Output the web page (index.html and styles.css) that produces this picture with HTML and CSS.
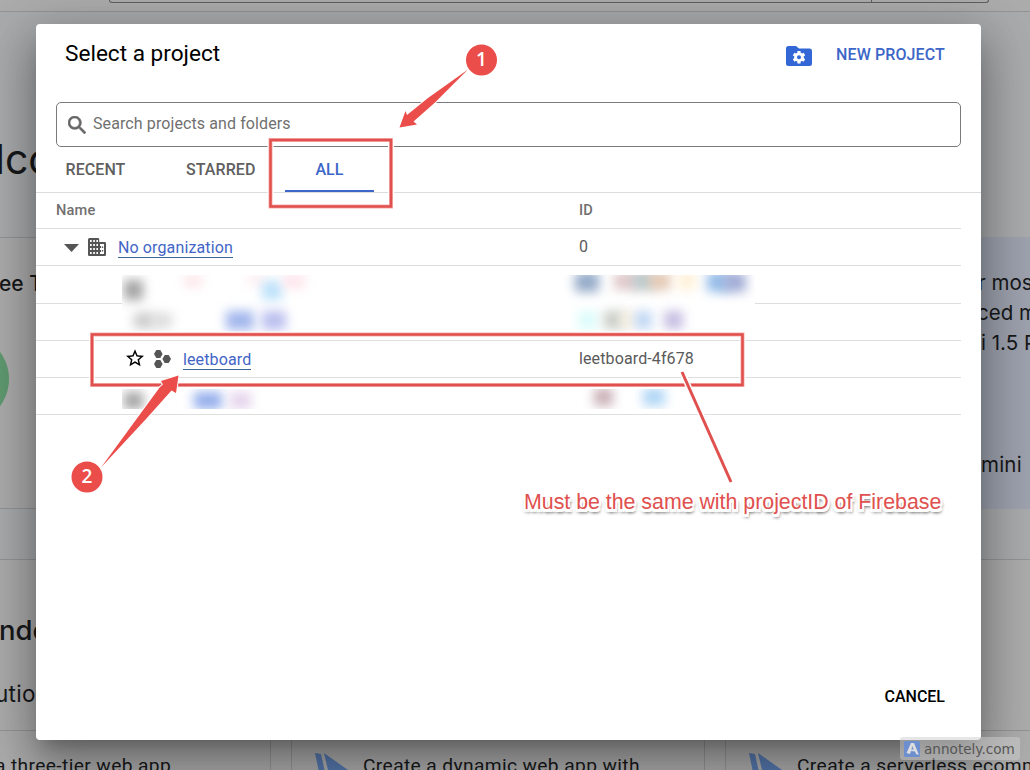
FILE: index.html
```html
<!DOCTYPE html>
<html lang="en">
<head>
<meta charset="utf-8">
<title>Select a project</title>
<link rel="stylesheet" href="styles.css">
</head>
<body>
<div class="page">
  <header class="topbar"><div class="top-search"></div></header>
  <section class="welcome"><h1>lco</h1></section>
  <section class="promo">
    <div class="trial"><span>ee T</span>
      <svg class="ring" width="9" height="90" viewBox="0 0 9 90"><circle cx="-37" cy="45" r="46" fill="#5f9a70"/></svg>
    </div>
    <div class="gemini"><p>r mos</p><p>ced m</p><p>i 1.5 P</p><p class="try">mini</p></div>
  </section>
  <section class="gap"></section>
  <section class="recommended"><h2>nde</h2><p>utio</p></section>
  <section class="cards">
    <div class="card first">a three-tier web app</div>
    <div class="card"><svg class="flag" width="36" height="24" viewBox="0 0 36 24"><path d="M0 0l6 1 5 23H5z" fill="#5577ac"/><path d="M9 0l24 17H13z" fill="#5577ac"/><path d="M13 17h20l-8 7H15z" fill="#254b91"/></svg>Create a dynamic web app with</div>
    <div class="card last"><svg class="flag" width="36" height="24" viewBox="0 0 36 24"><path d="M0 0l6 1 5 23H5z" fill="#5577ac"/><path d="M9 0l24 17H13z" fill="#5577ac"/><path d="M13 17h20l-8 7H15z" fill="#254b91"/></svg>Create a serverless ecomm</div>
  </section>
</div>

<main class="dialog">
  <div class="head">
    <h2 class="title">Select a project</h2>
    <svg class="folder" width="26" height="20" viewBox="0 0 26 20"><path d="M2.500 0H10l3 2.600h10.500A2.500 2.500 0 0 1 26 5v12.500a2.500 2.500 0 0 1-2.500 2.500h-21A2.500 2.500 0 0 1 0 17.500v-15A2.500 2.500 0 0 1 2.500 0z" fill="#3367d6"/><g fill="#fff" transform="translate(13 11.200)"><circle r="4.800"/><rect x="-1.600" y="-6.300" width="3.200" height="12.600" rx=".6"/><rect x="-1.600" y="-6.300" width="3.200" height="12.600" rx=".6" transform="rotate(60)"/><rect x="-1.600" y="-6.300" width="3.200" height="12.600" rx=".6" transform="rotate(120)"/></g><circle cx="13" cy="11.200" r="2" fill="#3367d6"/></svg>
    <a class="new">NEW PROJECT</a>
  </div>
  <div class="search">
    <svg width="18" height="18" viewBox="3 3 17.500 17.500"><path fill="#666" stroke="#666" stroke-width=".6" d="M15.500 14h-.79l-.28-.27A6.471 6.471 0 0 0 16 9.500 6.500 6.500 0 1 0 9.500 16c1.610 0 3.090-.59 4.230-1.570l.27.28v.79l5 4.990L20.490 19l-4.990-5zm-6 0C7.010 14 5 11.990 5 9.500S7.010 5 9.500 5 14 7.010 14 9.500 11.990 14 9.500 14z"/></svg>
    <span>Search projects and folders</span>
  </div>
  <nav class="tabs"><span class="tab recent">RECENT</span><span class="tab starred">STARRED</span><span class="tab all">ALL</span></nav>
  <div class="table">
    <div class="row header"><span class="name">Name</span><span class="id">ID</span></div>
    <div class="row org">
      <span class="name">
        <svg class="caret" width="15" height="8" viewBox="0 0 15 8"><path d="M0 0h15L7.500 8z" fill="#555"/></svg>
        <svg class="building" width="18" height="18" viewBox="0 0 18 18"><path fill="#555" fill-rule="evenodd" d="M1.500 0h8.500a1.200 1.200 0 0 1 1.200 1.200V4h5.600A1.200 1.200 0 0 1 18 5.200v11.600a1.200 1.200 0 0 1-1.200 1.200H1.200A1.200 1.200 0 0 1 0 16.800V1.500A1.500 1.500 0 0 1 1.500 0zM2 2v2h1.700V2zm3.200 0v2h1.700V2zm3.200 0v2H10V2zM2 6v2h1.700V6zm3.200 0v2h1.700V6zm3.200 0v2H10V6zM2 10v2h1.700v-2zm3.200 0v2h1.700v-2zm3.200 0v2H10v-2zM2 14v2h1.700v-2zm3.200 0v2h1.700v-2zm3.200 0v2H10v-2zM12 6v2h1v2h-1v2h1v2h-1v2h4V6zm1.800 2.500h1.400V10h-1.400zm0 3.500h1.400v1.500h-1.400z"/></svg>
        <a>No organization</a></span><span class="id">0</span>
    </div>
    <div class="row"></div>
    <div class="row second"></div>
    <div class="row leet">
      <span class="name">
        <svg class="star" width="18" height="18" viewBox="2 2 20 19.500"><path d="M22 9.240l-7.190-.62L12 2 9.190 8.630 2 9.240l5.460 4.730L5.820 21 12 17.270 18.180 21l-1.630-7.030L22 9.240zM12 15.400l-3.760 2.270 1-4.280-3.320-2.880 4.380-.38L12 6.100l1.710 4.040 4.380.38-3.320 2.880 1 4.280L12 15.400z"/></svg>
        <svg class="hex" width="17" height="18" viewBox="0 0 17 18" fill="#555"><path d="M2.300 0h4l2.300 4-2.300 4h-4L0 4z"/><path d="M2.300 10h4l2.300 4-2.300 4h-4L0 14z"/><path d="M10.700 5h4L17 9l-2.300 4h-4L8.400 9z"/></svg>
        <a>leetboard</a></span><span class="id">leetboard-4f678</span>
    </div>
    <div class="row"></div>
  </div>
  <div class="actions"><a>CANCEL</a></div>
</main>

<div class="redacted upper">
  <i style="left:2px;top:5px;width:19px;height:20px;background:#999"></i>
  <i style="left:62px;top:0;width:18px;height:12px;background:#fce3e8"></i>
  <i style="left:125px;top:0;width:20px;height:10px;background:#fdecef"></i>
  <i style="left:140px;top:6px;width:20px;height:19px;background:#b5defb"></i>
  <i style="left:161px;top:0;width:22px;height:13px;background:#fde0e8"></i>
  <i style="left:12px;top:38px;width:20px;height:15px;background:#c4c4c4"></i>
  <i style="left:30px;top:38px;width:20px;height:15px;background:#d8d8d8"></i>
  <i style="left:104px;top:36px;width:28px;height:19px;background:#98aeeb"></i>
  <i style="left:140px;top:36px;width:24px;height:19px;background:#b3b8ed"></i>
  <i style="left:453px;top:-3px;width:24px;height:20px;background:#88a1c2"></i>
  <i style="left:492px;top:-3px;width:24px;height:18px;background:#dcc2c3"></i>
  <i style="left:511px;top:-3px;width:22px;height:18px;background:#b0c2c5"></i>
  <i style="left:527px;top:-3px;width:22px;height:18px;background:#e3c4ad"></i>
  <i style="left:556px;top:-3px;width:18px;height:18px;background:#fff0d5"></i>
  <i style="left:585px;top:-3px;width:22px;height:20px;background:#88b5e6"></i>
  <i style="left:602px;top:-3px;width:22px;height:20px;background:#98a3d1"></i>
  <i style="left:456px;top:36px;width:20px;height:18px;background:#d8fcfa"></i>
  <i style="left:482px;top:36px;width:20px;height:18px;background:#c0c8c0"></i>
  <i style="left:498px;top:36px;width:16px;height:18px;background:#f6eddf"></i>
  <i style="left:513px;top:36px;width:17px;height:18px;background:#b8d2f2"></i>
  <i style="left:542px;top:36px;width:19px;height:18px;background:#c0b6df"></i>
</div>
<div class="redacted lower">
  <i style="left:2px;top:3px;width:19px;height:17px;background:#999"></i>
  <i style="left:72px;top:3px;width:28px;height:17px;background:#88a5ea"></i>
  <i style="left:108px;top:3px;width:21px;height:17px;background:#e2d0eb"></i>
  <i style="left:472px;top:-1px;width:19px;height:18px;background:#c4a8b0"></i>
  <i style="left:521px;top:-1px;width:22px;height:18px;background:#a8d2f5"></i>
</div>

<svg class="marks" width="1030" height="770" viewBox="0 0 1030 770">
  <g fill="none" stroke="#fff" stroke-width="6"><rect x="270.500" y="140" width="120.500" height="66.500"/><rect x="92" y="334.500" width="650.500" height="50.500"/></g>
  <g fill="none" stroke="#f7b0ae" stroke-width="4"><rect x="270.500" y="140" width="120.500" height="66.500"/><rect x="92" y="334.500" width="650.500" height="50.500"/></g>
  <g fill="none" stroke="#df504e" stroke-width="2.500"><rect x="270.500" y="140" width="120.500" height="66.500"/><rect x="92" y="334.500" width="650.500" height="50.500"/></g>
  <path d="M682 372l49 110" stroke="#fff" stroke-width="6"/>
  <path d="M682 372l49 110" stroke="#df504e" stroke-width="3"/>
  <g fill="#eb4d4b" stroke="#fff" stroke-width="2" paint-order="stroke">
    <path d="M468 69.500L435 102.500 413.500 121.500 417 124.500 399.500 127.500 405.500 111 407 115 428 98z"/>
    <path d="M101 467.500L160 387 163 384.500 161 381 178.500 375.500 176 393 171.500 390.500 146 419z"/>
  </g>
  <g fill="#eb4d4b"><circle cx="481.500" cy="60" r="15.500"/><circle cx="87" cy="477" r="15.500"/></g>
</svg>
<span class="num one">1</span>
<span class="num two">2</span>
<p class="note">Must be the same with projectID of Firebase</p>
<div class="watermark"><svg width="16" height="16" viewBox="0 0 16 16"><rect width="16" height="16" rx="1.500" fill="#6d8fd0"/><path d="M2.500 12L7 2h3l5 12-3-1-1-2.500-4-.5-1 3zM8.500 5L7.300 8.500h2.400z" fill="#ddd" fill-rule="evenodd"/></svg><span>annotely.com</span></div>
</body>
</html>
```
FILE: styles.css
```css
* { box-sizing: border-box; }
body { margin: 0; width: 1030px; height: 770px; overflow: hidden; position: relative; font-family: Roboto, sans-serif; }
h1, h2, p { margin: 0; font-weight: 400; }
.page { width: 1030px; height: 770px; overflow: hidden; background: #acacac; color: #17181a; display: flex; flex-direction: column; white-space: nowrap; font-family: Inter, sans-serif; }
.topbar { height: 12px; flex: none; border-bottom: 1px solid #929496; padding-left: 109px; }
.top-search { width: 880px; height: 3px; border: 1px solid #5d5f61; border-top: 0; border-radius: 0 0 4px 4px; background: linear-gradient(90deg, transparent 761px, #5d5f61 761px, #5d5f61 762px, transparent 762px); }
.welcome { height: 225px; flex: none; background: #a9abad; padding-top: 122px; }
.welcome h1 { font-size: 41px; line-height: 50px; margin-left: -5px; }
.promo { height: 272px; flex: none; display: flex; justify-content: space-between; background: #acacac; }
.trial { width: 60px; border-top: 1px solid #929496; border-bottom: 1px solid #929496; padding-top: 33px; font-size: 21px; line-height: 26px; font-weight: 500; }
.trial span { margin-left: -1px; }
.ring { display: block; margin-top: 37px; }
.gemini { width: 49px; background: #9da2ae; overflow: hidden; padding-top: 31px; font-size: 20.500px; line-height: 30px; display: flex; flex-direction: column; }
.gemini p:nth-child(1) { margin-left: -3px; }
.gemini p:nth-child(2) { margin-left: -4px; }
.gemini .try { margin-top: 92px; letter-spacing: .2px; }
.gap { height: 51px; flex: none; background: #a9abad; border-bottom: 1px solid #929496; }
.recommended { height: 170px; flex: none; padding-top: 51px; }
.recommended h2 { font-size: 27.500px; line-height: 38px; font-weight: 500; margin-left: -1px; }
.recommended p { font-size: 22.500px; line-height: 30px; margin: 30px 0 0 -5px; letter-spacing: .3px; }
.cards { flex: none; height: 40px; display: flex; gap: 20px; font-family: Roboto, sans-serif; font-size: 19.200px; letter-spacing: .38px; }
.card { width: 414px; height: 100px; flex: none; border: 1px solid #929496; padding: 22px 0 0 23px; display: flex; line-height: 26px; }
.card.first { width: 271px; border-left: 0; padding-left: 0; text-indent: -5px; }
.card .flag { flex: none; margin-right: 12px; }
.dialog { position: absolute; left: 36px; top: 24px; width: 945px; height: 716px; background: #fff; border-radius: 4px; display: flex; flex-direction: column; box-shadow: 0 12px 16px -8px rgba(0,0,0,.22), 0 27px 43px 3px rgba(0,0,0,.2), 0 10px 52px 9px rgba(0,0,0,.2); }
.head { height: 78px; padding: 14px 36px 0 29px; display: flex; align-items: flex-start; }
.title { font-size: 22.600px; line-height: 30px; flex: 1; margin-top: 1px; }
.folder { margin: 8px 24px 0 0; }
.new { color: #3c66c8; font-size: 16px; font-weight: 500; line-height: 34px; letter-spacing: .12px; }
.search { height: 45px; margin: 0 20px; border: 1px solid #777b7d; border-radius: 5px; display: flex; align-items: center; gap: 7px; padding-left: 11px; color: #707070; font-size: 16px; letter-spacing: .1px; }
.search span { margin-top: -2px; }
.tabs { height: 46px; border-bottom: 1px solid #dadcde; padding-left: 29.500px; display: flex; font-size: 16px; font-weight: 500; line-height: 46px; color: #606060; letter-spacing: .08px; }
.tab.recent { width: 120.500px; }
.tab.starred { width: 99px; }
.tab.all { width: 89px; height: 45px; color: #3c66c8; text-align: center; border-bottom: 2px solid #3c66c8; }
.table { width: 925px; flex: 1; font-size: 16px; color: #5a5a5a; letter-spacing: .12px; }
.row { height: 37px; border-bottom: 1px solid #dedede; display: flex; align-items: center; }
.row.header { height: 36px; padding-bottom: 2px; font-size: 14.600px; font-weight: 500; color: #707070; letter-spacing: .2px; }
.header .name { padding-left: 20px; }
.row:nth-child(3) { height: 38px; }
.id { margin-top: -1px; }
.header .id { margin-top: 0; }
.name { width: 543px; display: flex; align-items: center; }
.org .name { padding-left: 28px; }
.caret { margin-top: 1px; }
.building { margin: 0 12px 0 9px; }
.leet .name { padding-left: 90px; }
.hex { margin: 0 12px 0 10px; }
.star { margin-top: -2px; }
.name a { color: #4265c6; line-height: 19px; border-bottom: 1px solid #366798; margin-top: 2px; }
.leet .name a { margin-top: 1px; }
.actions { padding: 0 36px 32px; text-align: right; font-size: 16px; line-height: 22px; font-weight: 500; }
.redacted { position: absolute; overflow: hidden; left: 122px; width: 633px; background: #fff; }
.redacted.upper { top: 275px; height: 58px; }
.redacted.lower { top: 389px; height: 20px; }
.redacted i { position: absolute; filter: blur(5.500px); opacity: .9; }
.marks { position: absolute; left: 0; top: 0; }
.num { position: absolute; width: 31px; line-height: 31px; text-align: center; color: #fff; font-family: "Open Sans", sans-serif; font-size: 19px; font-weight: 600; }
.num.one { left: 466px; top: 44px; }
.num.two { left: 71.500px; top: 461px; }
.note { position: absolute; left: 524px; top: 489px; font-family: "Liberation Sans", sans-serif; font-size: 21.330px; line-height: 26px; color: #df504e; white-space: nowrap; text-shadow: 0 0 2px #fff, 2px 1px 0 #fff, -2px 1px 0 #fff, 0 2px 0 #fff, 2px 3px 0 #fff, -2px 3px 0 #fff, 0 3px 0 #fff, 2px 4px 3px rgba(0,0,0,.6), -1px 4px 3px rgba(0,0,0,.3); }
.watermark { position: absolute; left: 900px; top: 737px; width: 120px; height: 23px; border-radius: 3px; background: rgba(205,205,205,.5); display: flex; align-items: center; gap: 4px; padding-left: 4px; color: #555; font-family: "DejaVu Sans", sans-serif; font-size: 13.600px; }
```
